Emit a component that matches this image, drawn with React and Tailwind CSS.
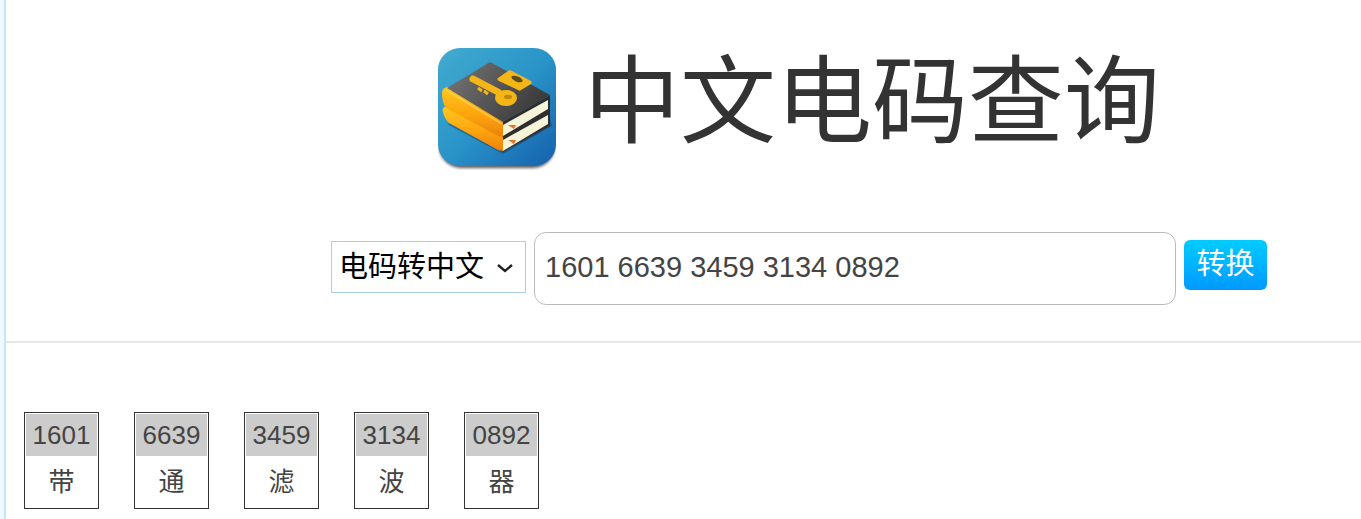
const cells = [["1601","带"],["6639","通"],["3459","滤"],["3134","波"],["0892","器"]];
const font = "font-['Liberation_Sans','Noto_Sans_CJK_SC',sans-serif]";

function Logo() {
  return (
    <svg width="118" height="122" viewBox="0 0 118 122" className="block">
      <defs>
        <linearGradient id="bg" x1="0" y1="0" x2="1" y2="1">
          <stop offset="0" stopColor="#42abcf" />
          <stop offset="0.5" stopColor="#2a94c9" />
          <stop offset="1" stopColor="#1560ac" />
        </linearGradient>
        <linearGradient id="org" x1="0" y1="0" x2="0" y2="1">
          <stop offset="0" stopColor="#ffc81e" />
          <stop offset="0.55" stopColor="#fda40c" />
          <stop offset="1" stopColor="#ec8206" />
        </linearGradient>
        <linearGradient id="top" x1="0" y1="0" x2="1" y2="0.4">
          <stop offset="0" stopColor="#777" />
          <stop offset="1" stopColor="#3c3c3c" />
        </linearGradient>
        <filter id="sh" x="-10%" y="-10%" width="120%" height="120%">
          <feGaussianBlur stdDeviation="1.8" />
        </filter>
        <filter id="soft" x="-5%" y="-5%" width="110%" height="110%">
          <feGaussianBlur stdDeviation="0.6" />
        </filter>
      </defs>
      <rect x="1" y="3" width="116" height="117" rx="22" fill="#333" opacity="0.8" filter="url(#sh)" />
      <rect x="0" y="0" width="118" height="118" rx="22" fill="url(#bg)" />
      <g filter="url(#soft)">
        <path d="M9 76 L65 106 L114 78 L110 62 Z" fill="#173f66" opacity="0.5" />
        <path d="M65 74 L112 47 L112 78 L65 104 Z" fill="#2e2e2e" />
        <path d="M65 92 L110 67 L110 76 L65 103 Z" fill="#f5f3d8" />
        <path d="M65 77 L110 52 L110 61 L65 88 Z" fill="#f5f3d8" />
        <path d="M5 64 C4 61 5 59 8 59 L65 89 L65 103 L60 102 L11 75 C8 72 6 69 5 64 Z" fill="url(#org)" />
        <path d="M4 45 C4 41 7 39 10 39 L65 73 L65 89 L60 88 L8 60 C5 56 4 50 4 45 Z" fill="url(#org)" />
        <path d="M8 42 L64 76" stroke="#ffdf66" strokeWidth="2" fill="none" opacity="0.55" />
        <path d="M70 77 L76 81 L78 77 Z" fill="#e8722b" />
        <path d="M70 92 L76 96 L78 92 Z" fill="#e8722b" />
        <path d="M52 14 L112 47 L65 74 L9 40 Z" fill="url(#top)" />
        <path d="M60 30 L70 23 C71 22 73 22 74 23 L93 33 C94 34 94 35 93 36 L83 42 C82 43 81 43 80 42 L61 33 C59 32 59 31 60 30 Z" fill="#f4b518" />
        <ellipse cx="79" cy="31" rx="6" ry="2.6" transform="rotate(22 79 31)" fill="#5d4b20" />
        <path d="M35 31 L60 44" stroke="#f4b518" strokeWidth="7" strokeLinecap="round" fill="none" />
        <path d="M40 40 L44 43 M46 43 L50 46" stroke="#f4b518" strokeWidth="3" fill="none" />
        <ellipse cx="68" cy="50" rx="11" ry="8" fill="#f4b518" />
        <ellipse cx="70" cy="49" rx="4" ry="2.2" fill="#c48708" />
      </g>
    </svg>
  );
}

export default function App() {
  return (
    <div className={`min-h-[519px] bg-white overflow-hidden text-[#333] flex ${font}`}>
      <div className="w-1 shrink-0 bg-[#f0f9ff]" />
      <div className="w-[2px] shrink-0 bg-[#c6e6fc]" />
      <div className="flex-1 min-w-0">
        <div className="flex items-start pl-[432px] pt-12 h-[170px]">
          <Logo />
          <h1 className="ml-[28px] text-[96px] leading-[104px] font-normal text-[#333] whitespace-nowrap mt-[2px]">中文电码查询</h1>
        </div>
        <div className="flex items-center pl-[325px] pt-[62px] pb-[36px]">
          <div className="flex items-center justify-between w-[195px] h-[52px] mb-[4px] border border-[#a9d0e8] pl-[7px] pr-[11px] pt-[2px] text-[29px] text-black">
            <span className="whitespace-nowrap">电码转中文</span>
            <svg width="18" height="10" viewBox="0 0 18 10"><path d="M2 2 L9 8 L16 2" fill="none" stroke="#222" strokeWidth="2.4" /></svg>
          </div>
          <div className="ml-2 flex items-center w-[642px] h-[73px] border border-[#bbb] rounded-[12px] pl-[10px] pb-[2px] text-[29px] text-[#444]">
            1601 6639 3459 3134 0892
          </div>
          <div className="ml-2 flex items-center justify-center w-[83px] h-[50px] mb-[8px] rounded-md text-white text-[29px] bg-gradient-to-b from-[#00ccff] to-[#0099ff]">转换</div>
        </div>
        <div className="border-t-2 border-[#e6e6e6] pl-[18px] pt-[69px] flex gap-[35px]">
          {cells.map(([n, c]) => (
            <div key={n} className="w-[75px] h-[97px] border border-[#333] p-px flex flex-col">
              <div className="h-[42px] bg-[#ccc] flex items-center justify-center text-[26px] text-[#444]">{n}</div>
              <div className="flex-1 flex items-center justify-center pt-[2px] text-[26px] text-[#444]">{c}</div>
            </div>
          ))}
        </div>
      </div>
    </div>
  );
}
